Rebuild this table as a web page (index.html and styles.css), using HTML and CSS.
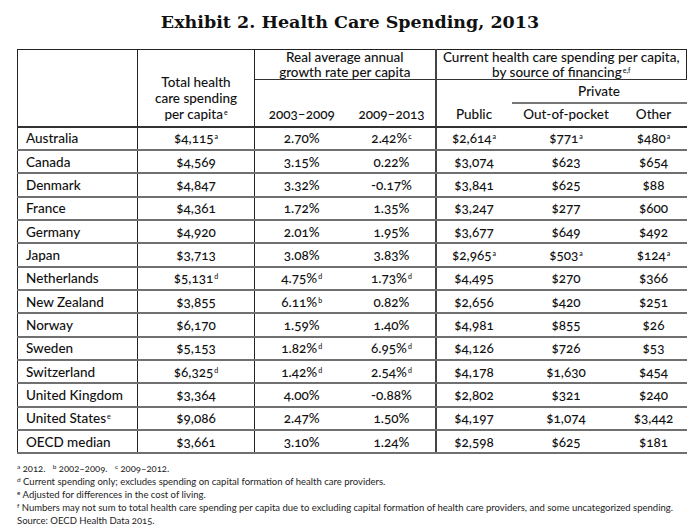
FILE: index.html
```html
<!DOCTYPE html>
<html lang="en">
<head>
<meta charset="utf-8">
<title>Exhibit 2. Health Care Spending, 2013</title>
<link rel="stylesheet" href="styles.css">
</head>
<body>
<div class="page">
  <h1 class="title">Exhibit 2. Health Care Spending, 2013</h1>
  <table class="exhibit">
    <colgroup>
      <col class="c-country">
      <col class="c-total">
      <col class="c-y1">
      <col class="c-y2">
      <col class="c-public">
      <col class="c-oop">
      <col class="c-other">
    </colgroup>
    <thead>
      <tr class="h1">
        <th rowspan="3" class="blank"></th>
        <th rowspan="3" class="total">Total health<br>care spending<br>per capita<sup>e</sup></th>
        <th colspan="2" class="group growth">Real average annual<br>growth rate per capita</th>
        <th colspan="3" class="group current">Current health care spending per capita,<br>by source of financing<sup>e,f</sup></th>
      </tr>
      <tr class="h2">
        <th rowspan="2" class="sub">2003–2009</th>
        <th rowspan="2" class="sub div">2009–2013</th>
        <th rowspan="2" class="sub">Public</th>
        <th colspan="2" class="private">Private</th>
      </tr>
      <tr class="h3">
        <th class="sub">Out-of-pocket</th>
        <th class="sub">Other</th>
      </tr>
    </thead>
    <tbody>
      <tr><td>Australia</td><td>$4,115<sup>a</sup></td><td>2.70%</td><td class="div">2.42%<sup>c</sup></td><td>$2,614<sup>a</sup></td><td>$771<sup>a</sup></td><td>$480<sup>a</sup></td></tr>
      <tr><td>Canada</td><td>$4,569</td><td>3.15%</td><td class="div">0.22%</td><td>$3,074</td><td>$623</td><td>$654</td></tr>
      <tr><td>Denmark</td><td>$4,847</td><td>3.32%</td><td class="div">-0.17%</td><td>$3,841</td><td>$625</td><td>$88</td></tr>
      <tr><td>France</td><td>$4,361</td><td>1.72%</td><td class="div">1.35%</td><td>$3,247</td><td>$277</td><td>$600</td></tr>
      <tr><td>Germany</td><td>$4,920</td><td>2.01%</td><td class="div">1.95%</td><td>$3,677</td><td>$649</td><td>$492</td></tr>
      <tr><td>Japan</td><td>$3,713</td><td>3.08%</td><td class="div">3.83%</td><td>$2,965<sup>a</sup></td><td>$503<sup>a</sup></td><td>$124<sup>a</sup></td></tr>
      <tr><td>Netherlands</td><td>$5,131<sup>d</sup></td><td>4.75%<sup>d</sup></td><td class="div">1.73%<sup>d</sup></td><td>$4,495</td><td>$270</td><td>$366</td></tr>
      <tr><td>New Zealand</td><td>$3,855</td><td>6.11%<sup>b</sup></td><td class="div">0.82%</td><td>$2,656</td><td>$420</td><td>$251</td></tr>
      <tr><td>Norway</td><td>$6,170</td><td>1.59%</td><td class="div">1.40%</td><td>$4,981</td><td>$855</td><td>$26</td></tr>
      <tr><td>Sweden</td><td>$5,153</td><td>1.82%<sup>d</sup></td><td class="div">6.95%<sup>d</sup></td><td>$4,126</td><td>$726</td><td>$53</td></tr>
      <tr><td>Switzerland</td><td>$6,325<sup>d</sup></td><td>1.42%<sup>d</sup></td><td class="div">2.54%<sup>d</sup></td><td>$4,178</td><td>$1,630</td><td>$454</td></tr>
      <tr><td>United Kingdom</td><td>$3,364</td><td>4.00%</td><td class="div">-0.88%</td><td>$2,802</td><td>$321</td><td>$240</td></tr>
      <tr><td>United States<sup>e</sup></td><td>$9,086</td><td>2.47%</td><td class="div">1.50%</td><td>$4,197</td><td>$1,074</td><td>$3,442</td></tr>
      <tr><td>OECD median</td><td>$3,661</td><td>3.10%</td><td class="div">1.24%</td><td>$2,598</td><td>$625</td><td>$181</td></tr>
    </tbody>
  </table>
  <div class="notes">
    <p><sup>a</sup> 2012. &nbsp;&nbsp;<sup>b</sup> 2002–2009. &nbsp;&nbsp;<sup>c</sup> 2009–2012.</p>
    <p><sup>d</sup> Current spending only; excludes spending on capital formation of health care providers.</p>
    <p><sup>e</sup> Adjusted for differences in the cost of living.</p>
    <p><sup>f</sup> Numbers may not sum to total health care spending per capita due to excluding capital formation of health care providers, and some uncategorized spending.</p>
    <p>Source: OECD Health Data 2015.</p>
  </div>
</div>
</body>
</html>
```

FILE: styles.css
```css
html, body {
  margin: 0;
  padding: 0;
  background: #fff;
}

.page {
  width: 700px;
  height: 525px;
  padding: 9px 0 0 17px;
  box-sizing: border-box;
  font-family: Lato, "Open Sans", sans-serif;
  color: #111;
  font-variant-numeric: oldstyle-nums;
}

.title {
  margin: 0 17px 0 0;
  text-align: center;
  font-family: "DejaVu Serif", serif;
  font-weight: bold;
  font-size: 17.5px;
  line-height: 26px;
  height: 40px;
  color: #111;
  box-sizing: border-box;
}

.exhibit {
  border-collapse: collapse;
  table-layout: fixed;
  width: 669px;
  font-size: 13.5px;
  font-weight: 500;
}

.c-country { width: 120px; }
.c-total { width: 117px; }
.c-y1 { width: 94px; }
.c-y2 { width: 87px; }
.c-public { width: 76px; }
.c-oop { width: 109px; }
.c-other { width: 66px; }

.exhibit th,
.exhibit td {
  padding: 0;
  text-align: center;
  font-weight: 500;
}

.exhibit sup {
  font-size: 7px;
  line-height: 0;
  vertical-align: 4px;
  margin-left: 1px;
}

.exhibit thead th {
  line-height: 16px;
  border-top: 1px solid #222;
}

.exhibit .h1 { height: 30px; }
.exhibit .h2 { height: 23px; }
.exhibit .h3 { height: 24px; }

.exhibit .blank {
  border-left: 1px solid #222;
  border-right: 1px solid #222;
  border-bottom: 2px solid #333;
}

.exhibit .total {
  vertical-align: bottom;
  padding-bottom: 4px;
  border-right: 1px solid #222;
  border-bottom: 2px solid #333;
}

.exhibit .group {
  vertical-align: middle;
  border-bottom: 1px solid #333;
  line-height: 14.5px;
}

.exhibit .growth {
  border-right: 2px solid #444;
}

.exhibit .current {
  border-right: 1px solid #222;
}

.exhibit .h2 th,
.exhibit .h3 th {
  border-top: none;
}

.exhibit .sub {
  vertical-align: bottom;
  padding-bottom: 4px;
  border-bottom: 2px solid #333;
}

.exhibit .private {
  vertical-align: middle;
  border-bottom: 2px solid #777;
}

.exhibit .div {
  border-right: 2px solid #444;
}

.exhibit tbody tr {
  height: 23.35px;
}

.exhibit tbody td {
  border-bottom: 2px solid #707070;
  line-height: 16px;
}

.exhibit tbody td:first-child {
  text-align: left;
  padding-left: 8px;
  border-left: 1px solid #222;
  border-right: 1px solid #222;
}

.exhibit tbody td:nth-child(2) {
  border-right: 1px solid #222;
}

.notes {
  margin-top: 8px;
  font-size: 9.5px;
  line-height: 13px;
  color: #222;
}

.notes p {
  margin: 0;
}

.notes sup {
  font-size: 6.5px;
  line-height: 0;
  vertical-align: 3px;
}
```
